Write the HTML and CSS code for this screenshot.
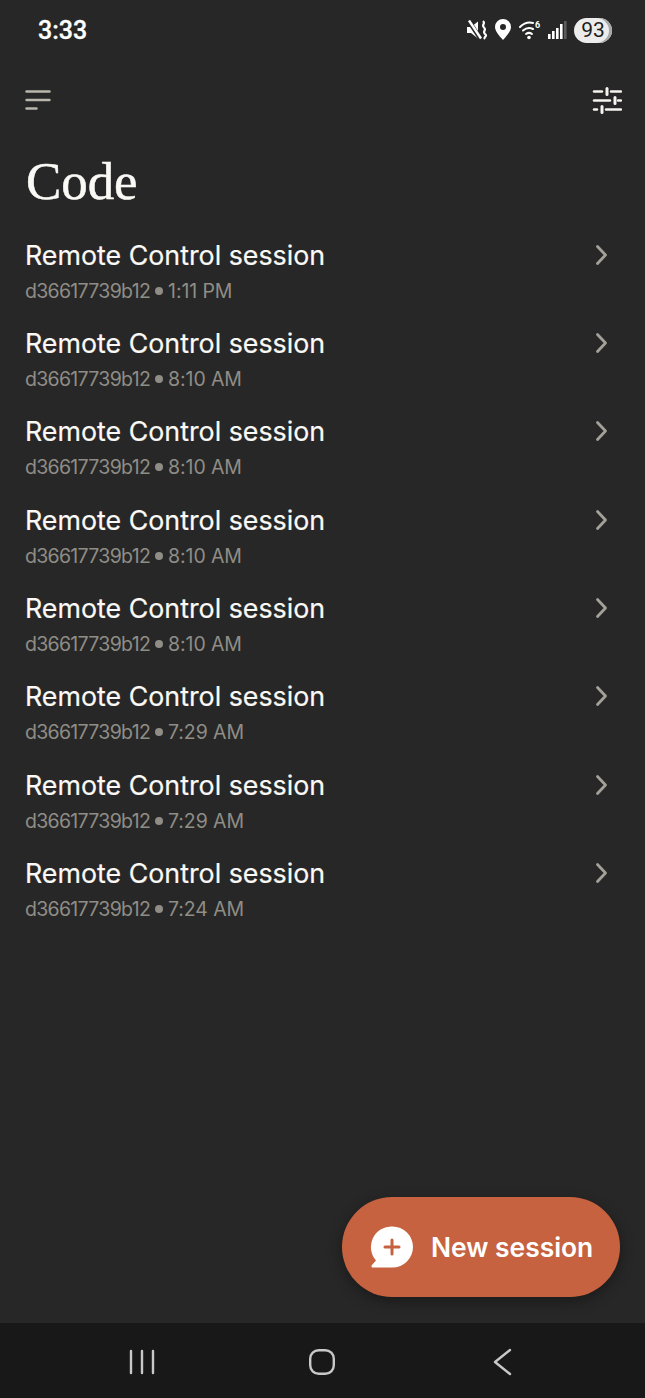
FILE: index.html
```html
<!DOCTYPE html>
<html lang="en">
<head>
  <meta charset="UTF-8">
  <title>Code</title>
  <link rel="stylesheet" href="styles.css">
</head>
<body>
  <div class="phone">

    <div class="status-bar">
      <span class="clock">3:33</span>
      <div class="status-icons">
        <svg class="icon-mute" width="20" height="22" viewBox="0 0 20 22">
          <path d="M0 8h4l7-5.500v17L4 14H0z" fill="#fff"/>
          <path d="M1 1l12 18" stroke="#272727" stroke-width="4.500"/>
          <path d="M2 1.500l12 18" stroke="#fff" stroke-width="2.400"/>
          <path d="M16 2c3 2.500-2 4 1 6.500s-2 4 1 6.500-2 3 0 5" fill="none" stroke="#fff" stroke-width="2.200"/>
        </svg>
        <svg class="icon-pin" width="18" height="24" viewBox="0 0 18 24">
          <path fill-rule="evenodd" fill="#fff" d="M9 1a8 8 0 0 1 8 8c0 4-4 8.500-8 13C5 17.500 1 13 1 9a8 8 0 0 1 8-8zm0 5a3 3 0 1 0 0 6 3 3 0 0 0 0-6z"/>
        </svg>
        <svg class="icon-wifi" width="22" height="20" viewBox="0 0 22 20">
          <g fill="none" stroke="#fff" stroke-width="2" stroke-linecap="round">
            <path d="M1 7c5-5 9-5 13-4"/>
            <path d="M4 10.500c3.500-3 7-3 10-1.500"/>
            <path d="M7 14c2-1.500 4-1.500 6 0"/>
          </g>
          <circle cx="10" cy="17.500" r="1.800" fill="#fff"/>
          <text class="wifi-six" x="16" y="8">6</text>
        </svg>
        <svg class="icon-signal" width="19" height="20" viewBox="0 0 19 20">
          <rect x="0" y="14" width="2.600" height="5" fill="#fff"/>
          <rect x="4" y="11" width="2.600" height="8" fill="#fff"/>
          <rect x="8" y="8" width="2.600" height="11" fill="#fff"/>
          <rect x="12" y="4" width="2.600" height="15" fill="#fff"/>
          <rect x="16" y="1" width="2.600" height="18" fill="#5c5c5c"/>
        </svg>
        <span class="battery">93</span>
      </div>
    </div>

    <div class="toolbar">
      <svg width="26" height="20" viewBox="0 0 26 20">
        <g stroke="#b9b6ac" stroke-width="2.400" stroke-linecap="round">
          <path d="M1.500 1.500h23"/>
          <path d="M1.500 10h23"/>
          <path d="M1.500 18.500h10"/>
        </g>
      </svg>
      <svg width="30" height="27" viewBox="0 0 30 27">
        <g stroke="#f5f4ef" stroke-width="2.400" stroke-linecap="round">
          <path d="M2 4.500h8"/><path d="M19 4.500h10"/>
          <path d="M2 13.500h16"/><path d="M26 13.500h3"/>
          <path d="M2 22.500h3"/><path d="M14 22.500h15"/>
        </g>
        <g stroke="#f5f4ef" stroke-width="3" stroke-linecap="round">
          <path d="M15 1.500v6"/><path d="M23 10.500v6"/><path d="M10 19.500v6"/>
        </g>
      </svg>
    </div>

    <h1 class="page-title">Code</h1>

    <ul class="sessions">
      <li class="session">
        <div>
          <div class="session-name">Remote Control session</div>
          <div class="session-meta"><span class="session-id">d36617739b12</span><i class="dot"></i><span>1:11 PM</span></div>
        </div>
        <svg class="chevron" width="14" height="22" viewBox="0 0 14 22"><path d="M2.500 2.500l8 8.500-8 8.500"/></svg>
      </li>
      <li class="session">
        <div>
          <div class="session-name">Remote Control session</div>
          <div class="session-meta"><span class="session-id">d36617739b12</span><i class="dot"></i><span>8:10 AM</span></div>
        </div>
        <svg class="chevron" width="14" height="22" viewBox="0 0 14 22"><path d="M2.500 2.500l8 8.500-8 8.500"/></svg>
      </li>
      <li class="session">
        <div>
          <div class="session-name">Remote Control session</div>
          <div class="session-meta"><span class="session-id">d36617739b12</span><i class="dot"></i><span>8:10 AM</span></div>
        </div>
        <svg class="chevron" width="14" height="22" viewBox="0 0 14 22"><path d="M2.500 2.500l8 8.500-8 8.500"/></svg>
      </li>
      <li class="session">
        <div>
          <div class="session-name">Remote Control session</div>
          <div class="session-meta"><span class="session-id">d36617739b12</span><i class="dot"></i><span>8:10 AM</span></div>
        </div>
        <svg class="chevron" width="14" height="22" viewBox="0 0 14 22"><path d="M2.500 2.500l8 8.500-8 8.500"/></svg>
      </li>
      <li class="session">
        <div>
          <div class="session-name">Remote Control session</div>
          <div class="session-meta"><span class="session-id">d36617739b12</span><i class="dot"></i><span>8:10 AM</span></div>
        </div>
        <svg class="chevron" width="14" height="22" viewBox="0 0 14 22"><path d="M2.500 2.500l8 8.500-8 8.500"/></svg>
      </li>
      <li class="session">
        <div>
          <div class="session-name">Remote Control session</div>
          <div class="session-meta"><span class="session-id">d36617739b12</span><i class="dot"></i><span>7:29 AM</span></div>
        </div>
        <svg class="chevron" width="14" height="22" viewBox="0 0 14 22"><path d="M2.500 2.500l8 8.500-8 8.500"/></svg>
      </li>
      <li class="session">
        <div>
          <div class="session-name">Remote Control session</div>
          <div class="session-meta"><span class="session-id">d36617739b12</span><i class="dot"></i><span>7:29 AM</span></div>
        </div>
        <svg class="chevron" width="14" height="22" viewBox="0 0 14 22"><path d="M2.500 2.500l8 8.500-8 8.500"/></svg>
      </li>
      <li class="session">
        <div>
          <div class="session-name">Remote Control session</div>
          <div class="session-meta"><span class="session-id">d36617739b12</span><i class="dot"></i><span>7:24 AM</span></div>
        </div>
        <svg class="chevron" width="14" height="22" viewBox="0 0 14 22"><path d="M2.500 2.500l8 8.500-8 8.500"/></svg>
      </li>
    </ul>

    <button class="new-session">
      <svg width="44" height="44" viewBox="0 0 44 44">
        <path fill="#fff" d="M22.500 1.500a20.500 20.500 0 0 1 0 41H3c-1.500 0-2-1.500-1-2.500l4-4.500A20.500 20.500 0 0 1 22.500 1.500z"/>
        <path d="M22 15v14M15 22h14" stroke="#c6623f" stroke-width="3" stroke-linecap="round"/>
      </svg>
      New session
    </button>

    <div class="nav-bar">
      <svg width="26" height="26" viewBox="0 0 26 26">
        <path d="M2 2v22M13 2v22M24 2v22" stroke="#c8c8c8" stroke-width="2.400" stroke-linecap="round"/>
      </svg>
      <svg class="nav-home" width="26" height="26" viewBox="0 0 26 26">
        <rect x="1.200" y="1.200" width="23.600" height="23.600" rx="8.500" fill="none" stroke="#c8c8c8" stroke-width="2.400"/>
      </svg>
      <svg width="20" height="28" viewBox="0 0 20 28">
        <path d="M17 2L2 14l15 12" fill="none" stroke="#c8c8c8" stroke-width="2.400" stroke-linecap="round" stroke-linejoin="round"/>
      </svg>
    </div>

  </div>
</body>
</html>
```

FILE: styles.css
```css
html, body {
  margin: 0;
  padding: 0;
}
body {
  background: #272727;
  font-family: Inter, "Noto Sans", sans-serif;
}
.phone {
  position: relative;
  width: 645px;
  height: 1398px;
  display: flex;
  flex-direction: column;
  overflow: hidden;
  background: #272727;
  color: #fff;
}

/* status bar */
.status-bar {
  height: 60px;
  flex: none;
  display: flex;
  align-items: center;
  justify-content: space-between;
  padding: 0 33px 0 38px;
}
.clock {
  font-family: Roboto, sans-serif;
  font-size: 25px;
  font-weight: 500;
  -webkit-text-stroke: 0.3px #fff;
}
.status-icons {
  display: flex;
  align-items: center;
  gap: 7px;
}
.wifi-six {
  font-family: Roboto, sans-serif;
  font-size: 9px;
  font-weight: 700;
  fill: #fff;
}
.battery {
  width: 38px;
  height: 25px;
  border-radius: 13px;
  background: #ececec;
  box-shadow: inset -3px 0 0 #a8a8a8;
  color: #1c1c1c;
  font-family: Roboto, sans-serif;
  font-size: 21px;
  line-height: 25px;
  text-align: center;
}

/* toolbar */
.toolbar {
  flex: none;
  display: flex;
  align-items: center;
  justify-content: space-between;
  height: 30px;
  margin-top: 25px;
  padding: 0 23px 0 25px;
}

.page-title {
  margin: 38px 0 0 26px;
  font-family: "Liberation Serif", serif;
  font-size: 53px;
  line-height: 56px;
  font-weight: 400;
  letter-spacing: -0.100px;
  -webkit-text-stroke: 0.5px #faf9f5;
  color: #faf9f5;
}

/* list */
.sessions {
  list-style: none;
  margin: 27.500px 0 0;
  padding: 0;
}
.session {
  display: flex;
  align-items: flex-start;
  justify-content: space-between;
  height: 88.400px;
  padding: 0 36px 0 25px;
  box-sizing: border-box;
}
.session-name {
  font-size: 26.800px;
  line-height: 36px;
  color: #faf9f5;
  -webkit-text-stroke: 0.2px #faf9f5;
}
.session-meta {
  display: flex;
  align-items: center;
  gap: 5px;
  font-size: 19.500px;
  line-height: 36px;
  letter-spacing: -0.100px;
  color: #8f8d86;
}
.session-id {
  letter-spacing: -0.700px;
}
.dot {
  width: 8px;
  height: 8px;
  border-radius: 50%;
  background: #8f8d86;
}
.chevron {
  margin-top: 7px;
  fill: none;
  stroke: #a3a19a;
  stroke-width: 2.800;
  stroke-linecap: round;
  stroke-linejoin: round;
}

/* floating button */
.new-session {
  position: absolute;
  right: 25px;
  bottom: 101px;
  width: 278px;
  height: 100px;
  display: flex;
  align-items: center;
  gap: 17px;
  padding: 0 0 0 28px;
  box-sizing: border-box;
  border: none;
  border-radius: 50px;
  background: #c6623f;
  color: #fff;
  font-family: Inter, sans-serif;
  font-size: 26.400px;
  font-weight: 600;
  box-shadow: 0 4px 14px rgba(0,0,0,0.35);
}

/* system nav */
.nav-bar {
  margin-top: auto;
  height: 75px;
  flex: none;
  display: flex;
  align-items: center;
  justify-content: space-between;
  padding: 3px 132px 0 129px;
  box-sizing: border-box;
  background: #181818;
}
.nav-home {
  margin-right: 4px;
}
```
